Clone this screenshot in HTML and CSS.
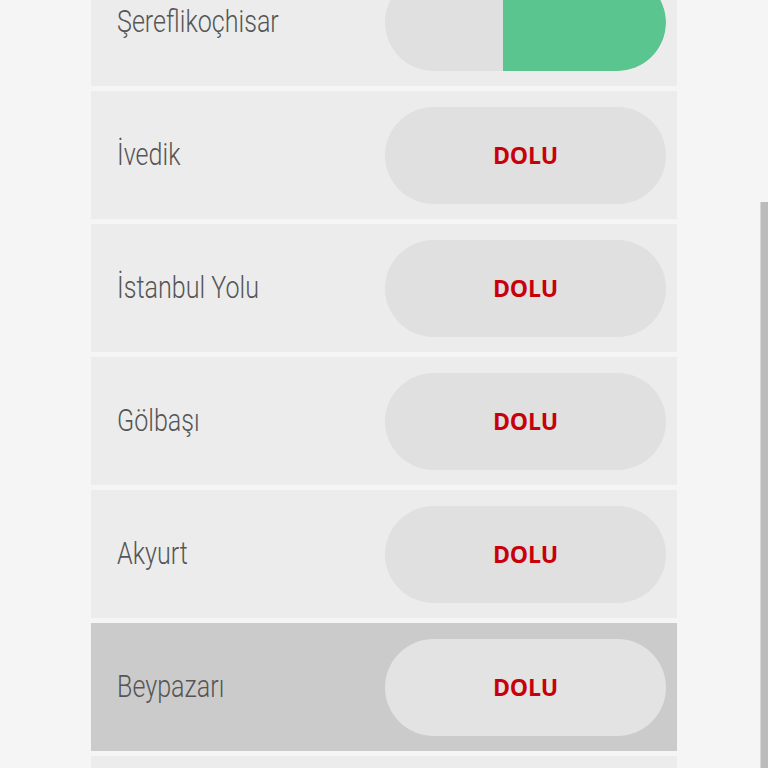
FILE: index.html
```html
<!DOCTYPE html>
<html lang="tr">
<head>
    <meta charset="UTF-8">
    <meta name="viewport" content="width=device-width, initial-scale=1.0">
    <link rel="stylesheet" href="styles.css">
</head>
<body>
    <div class="station-list">
        <div class="station-row">
            <p class="station-name">Şereflikoçhisar</p>
            <div class="status-pill">
                <div class="status-fill" style="width: 163px;"></div>
            </div>
        </div>
        <div class="station-row">
            <p class="station-name">İvedik</p>
            <div class="status-pill"><span class="status-text">DOLU</span></div>
        </div>
        <div class="station-row">
            <p class="station-name">İstanbul Yolu</p>
            <div class="status-pill"><span class="status-text">DOLU</span></div>
        </div>
        <div class="station-row">
            <p class="station-name">Gölbaşı</p>
            <div class="status-pill"><span class="status-text">DOLU</span></div>
        </div>
        <div class="station-row">
            <p class="station-name">Akyurt</p>
            <div class="status-pill"><span class="status-text">DOLU</span></div>
        </div>
        <div class="station-row selected">
            <p class="station-name">Beypazarı</p>
            <div class="status-pill"><span class="status-text">DOLU</span></div>
        </div>
        <div class="station-row">
            <p class="station-name"></p>
        </div>
    </div>

    <div class="scroll-thumb"></div>
</body>
</html>
```

FILE: styles.css
```css
html, body {
    margin: 0;
    padding: 0;
    height: 100vh;
    overflow: hidden;
}

body {
    background-color: #f5f5f5;
    font-family: Roboto, 'Noto Sans', sans-serif;
}

.station-list {
    margin-top: -42px;
    margin-left: 91px;
    width: 586px;
    display: flex;
    flex-direction: column;
    gap: 5px;
}

.station-row {
    height: 128px;
    background-color: #ececec;
    display: flex;
    align-items: center;
    justify-content: space-between;
    padding: 0 11px 0 26px;
    flex-shrink: 0;
}

.station-row.selected {
    background-color: #cbcbcb;
}

.station-name {
    margin: 0;
    margin-top: -1px;
    font-size: 31px;
    font-weight: 300;
    color: #555;
    transform: scaleX(0.81);   /* condensed face is not installed */
    transform-origin: left center;
    white-space: nowrap;
}

.status-pill {
    position: relative;
    width: 281px;
    height: 97px;
    border-radius: 48.5px;
    background-color: #e0e0e0;
    overflow: hidden;
    display: flex;
    align-items: center;
    justify-content: center;
}

.selected .status-pill {
    background-color: #e3e3e3;
}

.status-fill {
    position: absolute;
    top: 0;
    right: 0;
    height: 100%;
    background-color: #5bc58f;
    border-radius: 0 48.5px 48.5px 0;
}

.status-text {
    font-family: 'Open Sans', sans-serif;
    font-size: 23px;
    font-weight: 700;
    color: #c8000a;
    letter-spacing: -0.2px;
}

.scroll-thumb {
    position: fixed;
    top: 202px;
    right: 0;
    bottom: 0;
    width: 7px;
    background-color: #bcbcbc;
    border-left: 1px solid #d6d6d6;
}
```
